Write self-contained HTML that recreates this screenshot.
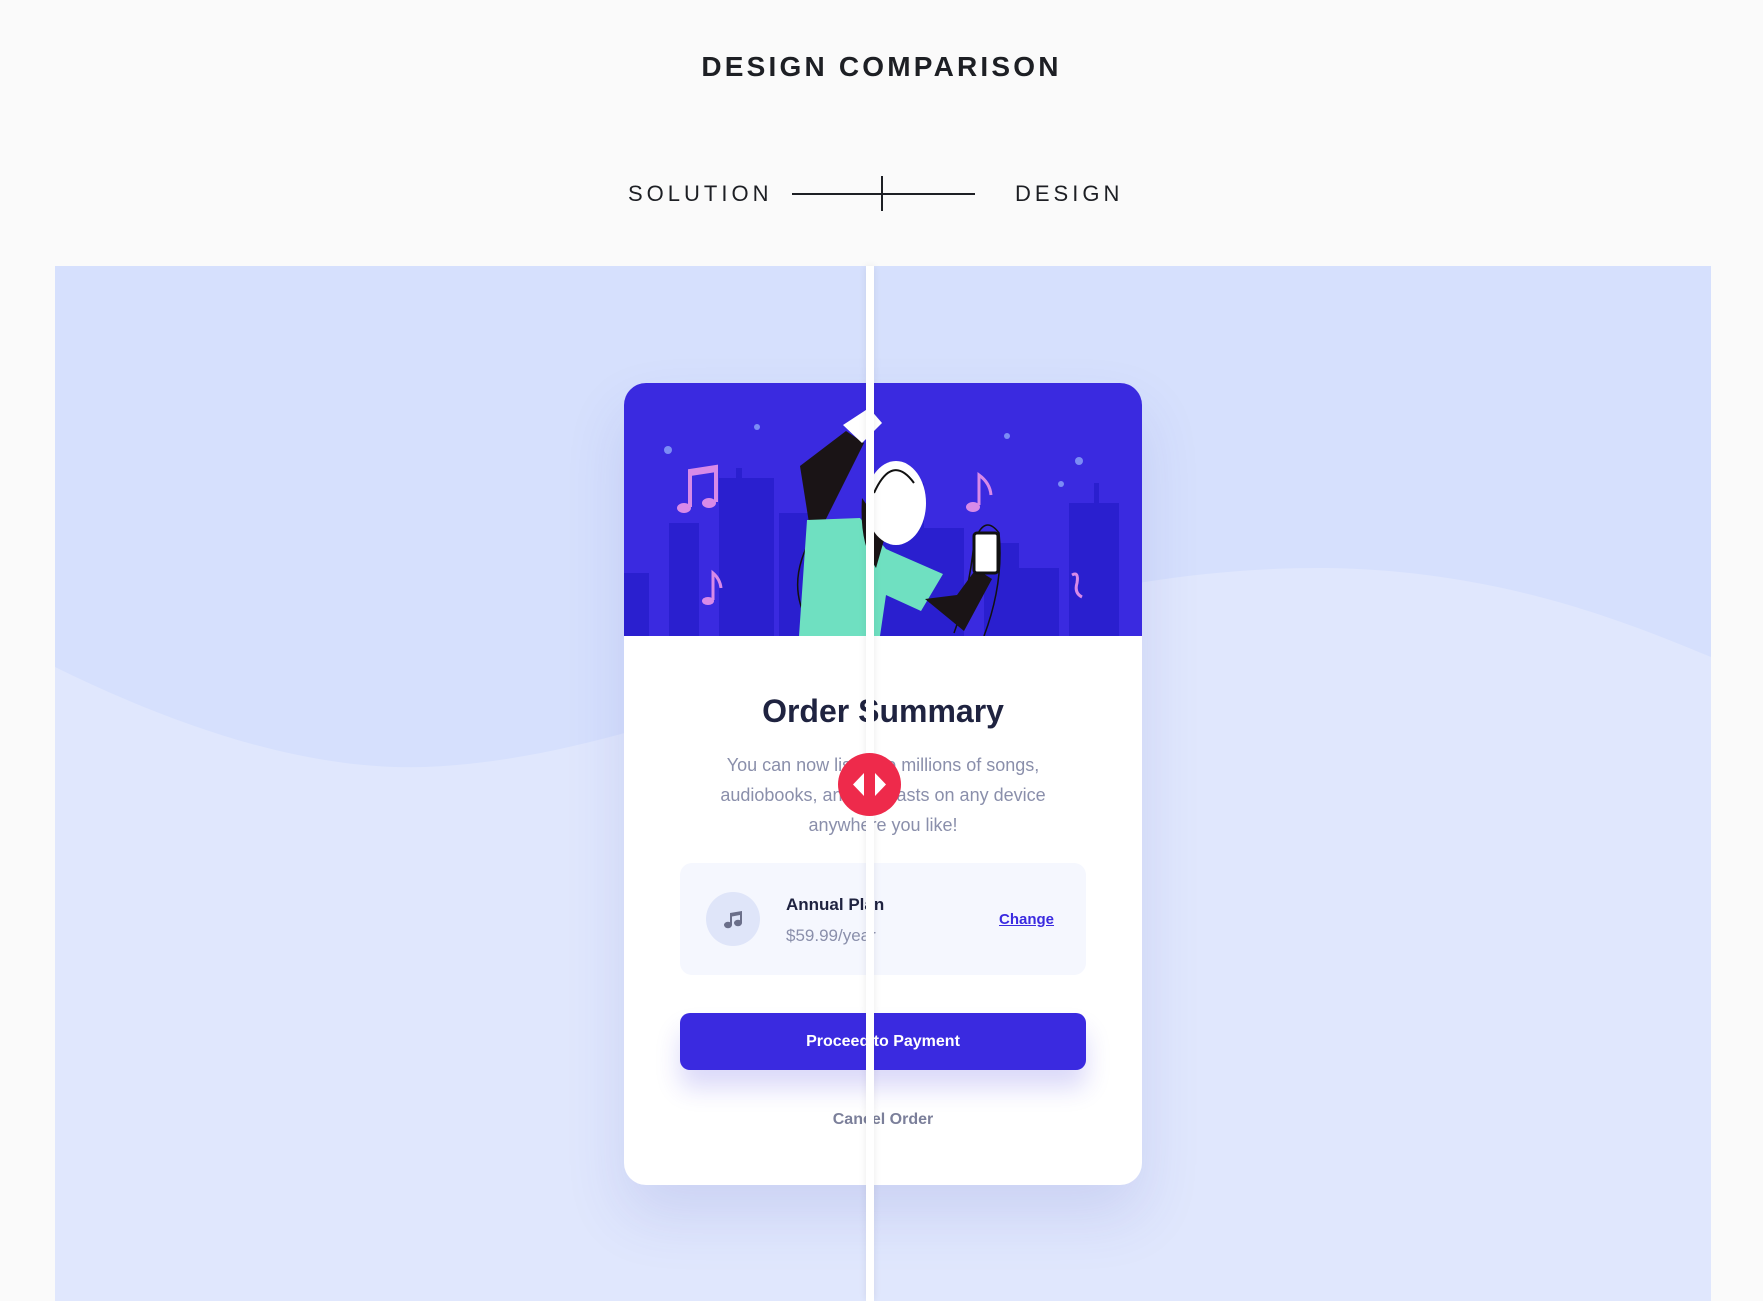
<!DOCTYPE html>
<html><head><meta charset="utf-8"><style>
*{margin:0;padding:0;box-sizing:border-box}
body{width:1763px;height:1301px;background:#fafafa;position:relative;overflow:hidden;font-family:"Liberation Sans",sans-serif}
.t{position:absolute;left:0;width:1763px;text-align:center;top:51px;font-size:28px;font-weight:bold;letter-spacing:3.2px;color:#1d1f24}
.lab{position:absolute;top:181px;font-size:22px;letter-spacing:4px;color:#1d1f24}
.panel{position:absolute;left:55px;top:266px;width:1656px;height:1035px;background:#d6e0fd;overflow:hidden}
.card{position:absolute;left:624px;top:383px;width:518px;height:802px;background:#fff;border-radius:22px;overflow:hidden;box-shadow:0 30px 60px rgba(60,70,180,.13)}
.ct{position:absolute;left:0;width:100%;text-align:center}
</style></head><body>
<div class="t">DESIGN COMPARISON</div>
<div class="lab" style="left:628px">SOLUTION</div>
<div class="lab" style="left:1015px">DESIGN</div>
<div style="position:absolute;left:792px;top:193px;width:183px;height:2px;background:#1d1f24"></div>
<div style="position:absolute;left:881px;top:176px;width:2px;height:35px;background:#1d1f24"></div>
<div class="panel">
<svg width="1656" height="1035" style="position:absolute;left:0;top:0"><path d="M0,401 C120,460 250,505 370,501 C650,490 900,300 1270,302 C1450,304 1580,360 1656,391 L1656,1035 L0,1035Z" fill="#e0e7fd"/></svg>
</div>
<div class="card">
<svg width="518" height="253" style="position:absolute;left:0;top:0">
<rect width="518" height="253" fill="#3a2ae0"/>
<g fill="#2a1fcf">
<rect x="0" y="190" width="25" height="63"/><rect x="45" y="140" width="30" height="113"/><rect x="95" y="95" width="55" height="158"/><rect x="112" y="85" width="6" height="15"/><rect x="155" y="130" width="30" height="123"/><rect x="250" y="100" width="50" height="153"/><rect x="300" y="145" width="40" height="108"/><rect x="360" y="160" width="35" height="93"/><rect x="395" y="185" width="40" height="68"/><rect x="445" y="120" width="50" height="133"/><rect x="470" y="100" width="5" height="25"/>
</g>
<g fill="#7b8cf5"><circle cx="44" cy="67" r="4"/><circle cx="133" cy="44" r="3"/><circle cx="383" cy="53" r="3"/><circle cx="455" cy="78" r="4"/><circle cx="437" cy="101" r="3"/></g>
<g fill="#d88ae8" stroke="#d88ae8">
<ellipse cx="60" cy="125" rx="7" ry="5" stroke="none"/><ellipse cx="85" cy="120" rx="7" ry="5" stroke="none"/><path d="M66,124 V88 L92,84 V119" fill="none" stroke-width="4"/><path d="M66,90 L92,86" stroke-width="6"/>
<ellipse cx="84" cy="218" rx="6" ry="4" stroke="none"/><path d="M89,217 V190 Q96,196 97,205" fill="none" stroke-width="3"/>
<ellipse cx="349" cy="124" rx="7" ry="5" stroke="none"/><path d="M355,122 V92 Q366,100 367,112" fill="none" stroke-width="3"/>
<path d="M448,192 Q455,188 453,200 Q450,210 458,214" fill="none" stroke-width="3"/>
</g>
<path d="M185,240 Q160,200 190,150 M330,250 Q345,210 350,160 Q360,130 375,150 Q380,200 360,253" fill="none" stroke="#111" stroke-width="1.5"/>
<path d="M176,83 L222,48 L240,60 L200,140 L185,140Z" fill="#1a1416"/>
<path d="M219,42 L245,25 L258,40 L238,60Z" fill="#fff"/>
<path d="M183,137 L236,135 L262,166 L319,191 L297,228 L262,212 L256,253 L175,253Z" fill="#6fe0c1"/>
<path d="M301,216 L340,248 L368,196 L352,186 L333,212Z" fill="#1a1416"/>
<path d="M238,115 Q235,160 252,185 L262,150Z" fill="#1a1416"/>
<ellipse cx="272" cy="120" rx="30" ry="42" fill="#fff"/>
<path d="M250,110 Q268,70 290,100" fill="none" stroke="#111" stroke-width="2"/>
<rect x="350" y="150" width="24" height="40" rx="3" fill="#fff" stroke="#111" stroke-width="3"/>
</svg>
<div class="ct" style="top:310px;font-size:32px;font-weight:bold;color:#1f2340">Order Summary</div>
<div class="ct" style="top:367px;font-size:18px;line-height:30px;color:#8a8fab;padding:0 70px">You can now listen to millions of songs, audiobooks, and podcasts on any device anywhere you like!</div>
<div style="position:absolute;left:56px;top:480px;width:406px;height:112px;background:#f5f7fe;border-radius:12px">
<div style="position:absolute;left:26px;top:29px;width:54px;height:54px;border-radius:50%;background:#dfe5f9"></div>
<svg width="54" height="54" style="position:absolute;left:26px;top:29px"><g fill="#6b6f8a"><ellipse cx="22" cy="33" rx="4" ry="3.2"/><ellipse cx="32" cy="31" rx="4" ry="3.2"/><path d="M24,33 V21 L36,19 V31 H34 V23 L26,24.5 V33Z"/></g></svg>
<div style="position:absolute;left:106px;top:32px;font-size:17px;font-weight:bold;color:#1f2340">Annual Plan</div>
<div style="position:absolute;left:106px;top:63px;font-size:17px;color:#8a8fab">$59.99/year</div>
<div style="position:absolute;left:319px;top:48px;font-size:15px;font-weight:bold;color:#3a2ae0;text-decoration:underline">Change</div>
</div>
<div style="position:absolute;left:56px;top:630px;width:406px;height:57px;background:#3a2ae0;border-radius:10px;box-shadow:0 18px 25px rgba(58,42,224,.18);color:#fff;font-size:16px;font-weight:bold;text-align:center;line-height:57px">Proceed to Payment</div>
<div class="ct" style="top:728px;font-size:16px;font-weight:bold;color:#7b7f9a">Cancel Order</div>
</div>
<div style="position:absolute;left:866px;top:266px;width:8px;height:1035px;background:#fff;box-shadow:0 0 8px rgba(0,0,0,.08)"></div>
<div style="position:absolute;left:838px;top:753px;width:63px;height:63px;border-radius:50%;background:#ee2a4b"></div>
<svg width="63" height="63" style="position:absolute;left:838px;top:753px"><path d="M26,20 L15,31.5 L26,43Z M37,20 L48,31.5 L37,43Z" fill="#fff"/></svg>
</body></html>
